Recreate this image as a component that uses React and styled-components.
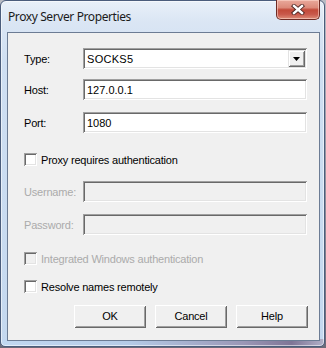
import React from 'react';
import styled, { createGlobalStyle } from 'styled-components';

const Global = createGlobalStyle`
  html, body { margin: 0; padding: 0; }
  body {
    width: 326px; height: 348px; overflow: hidden;
    background: linear-gradient(#b9bcc4, #6c6a78);
  }
`;

const Window = styled.div`
  box-sizing: border-box;
  width: 325px;
  height: 347px;
  border: 1px solid #4b5d7c;
  border-radius: 6px 6px 5px 5px;
  padding: 0 4px 5px 6px;
  display: flex;
  flex-direction: column;
  background:
    linear-gradient(to right, #c2d8f1 0%, #b4cae6 40%, #9a97b6 75%, #7f7596 90%, #b2b0c8 100%) bottom / 100% 7px no-repeat,
    linear-gradient(#e9f0f9 0px, #dbe6f4 20px, #cfdff2 60px, #c4d8ef 100%);
  box-shadow: inset 0 0 0 1px rgba(255,255,255,0.55);
`;

const TitleBar = styled.div`
  height: 31px;
  display: flex;
  justify-content: space-between;
  align-items: flex-start;
`;

const Title = styled.div`
  font-family: "Noto Sans", "Open Sans", sans-serif;
  font-size: 12px;
  color: #1b1b1b;
  padding: 7px 0 0 1px;
  line-height: 18px;
  letter-spacing: -0.4px;
`;

const CloseButton = styled.div`
  width: 44px;
  height: 20px;
  margin-top: -1px;
  box-sizing: border-box;
  border: 1px solid #6e2b24;
  border-top: none;
  border-radius: 0 0 5px 5px;
  background: linear-gradient(#e9a99b 0%, #dc8a7a 40%, #c24a39 52%, #c8584a 75%, #dd8c77 100%);
  box-shadow: inset 0 0 0 1px rgba(255, 220, 210, 0.55);
  display: flex;
  align-items: center;
  justify-content: center;
`;

const Client = styled.div`
  flex: 1;
  border: 1px solid #6c7c94;
  background: #f0f0f0;
  padding: 0 12px 0 16px;
  display: flex;
  flex-direction: column;
  font-family: "Liberation Sans", Arial, sans-serif;
  font-size: 11px;
  letter-spacing: -0.2px;
  color: #000;
`;

const Row = styled.div`
  display: flex;
  align-items: center;
  height: ${p => p.$h || 21}px;
  margin-top: ${p => p.$mt}px;
`;

const Label = styled.div`
  width: 59px;
  flex: none;
  color: ${p => (p.$disabled ? '#ababab' : '#000')};
`;

const sunken = `
  box-shadow:
    inset 1px 1px 0 #a0a0a0,
    inset -1px -1px 0 #ffffff,
    inset 2px 2px 0 #696969,
    inset -2px -2px 0 #e3e3e3;
`;

const Field = styled.div`
  box-sizing: border-box;
  flex: 1;
  height: 21px;
  background: ${p => (p.$disabled ? '#f0f0f0' : '#fff')};
  ${sunken}
  display: flex;
  align-items: center;
  padding: 0 2px 0 4px;
`;

const FieldText = styled.span`
  flex: 1;
  padding-top: 1px;
  letter-spacing: ${p => (p.$wide ? '0.3px' : '0')};
`;

const DropButton = styled.div`
  width: 17px;
  height: 17px;
  box-sizing: border-box;
  background: #f0f0f0;
  box-shadow:
    inset 1px 1px 0 #e3e3e3,
    inset -1px -1px 0 #696969,
    inset 2px 2px 0 #ffffff,
    inset -2px -2px 0 #a0a0a0;
  display: flex;
  align-items: center;
  justify-content: center;
`;

const Check = styled.div`
  box-sizing: border-box;
  width: 13px;
  height: 13px;
  flex: none;
  background: ${p => (p.$disabled ? '#f0f0f0' : '#fff')};
  ${sunken}
`;

const CheckLabel = styled.span`
  margin-left: 4px;
  color: ${p => (p.$disabled ? '#ababab' : '#000')};
`;

const ButtonRow = styled.div`
  display: flex;
  justify-content: flex-end;
  gap: 9px;
  margin-top: ${p => p.$mt}px;
  margin-right: -1px;
`;

const Button = styled.div`
  box-sizing: border-box;
  width: 72px;
  height: 23px;
  background: #f0f0f0;
  box-shadow:
    inset 1px 1px 0 #ffffff,
    inset -1px -1px 0 #696969,
    inset 2px 2px 0 #f0f0f0,
    inset -2px -2px 0 #a0a0a0;
  display: flex;
  align-items: center;
  justify-content: center;
  padding-bottom: 1px;
`;

export default function App() {
  return (
    <>
      <Global />
      <Window>
        <TitleBar>
          <Title>Proxy Server Properties</Title>
          <CloseButton>
            <svg width="14" height="11" viewBox="0 0 14 11">
              <path d="M3 2 L11 9 M11 2 L3 9" stroke="#4a2420" strokeWidth="4.2" strokeLinecap="square" fill="none" />
              <path d="M3 2 L11 9 M11 2 L3 9" stroke="#ffffff" strokeWidth="2.4" strokeLinecap="square" fill="none" />
            </svg>
          </CloseButton>
        </TitleBar>
        <Client>
          <Row $mt={15}>
            <Label>Type:</Label>
            <Field>
              <FieldText $wide>SOCKS5</FieldText>
              <DropButton>
                <svg width="7" height="4" viewBox="0 0 7 4">
                  <path d="M0 0 H7 L3.5 4 Z" fill="#000" />
                </svg>
              </DropButton>
            </Field>
          </Row>
          <Row $mt={10}>
            <Label>Host:</Label>
            <Field><FieldText>127.0.0.1</FieldText></Field>
          </Row>
          <Row $mt={12}>
            <Label>Port:</Label>
            <Field><FieldText>1080</FieldText></Field>
          </Row>
          <Row $mt={20} $h={13}>
            <Check />
            <CheckLabel>Proxy requires authentication</CheckLabel>
          </Row>
          <Row $mt={15}>
            <Label $disabled>Username:</Label>
            <Field $disabled />
          </Row>
          <Row $mt={12}>
            <Label $disabled>Password:</Label>
            <Field $disabled />
          </Row>
          <Row $mt={17} $h={13}>
            <Check $disabled />
            <CheckLabel $disabled>Integrated Windows authentication</CheckLabel>
          </Row>
          <Row $mt={15} $h={13}>
            <Check />
            <CheckLabel>Resolve names remotely</CheckLabel>
          </Row>
          <ButtonRow $mt={12}>
            <Button>OK</Button>
            <Button>Cancel</Button>
            <Button>Help</Button>
          </ButtonRow>
        </Client>
      </Window>
    </>
  );
}
